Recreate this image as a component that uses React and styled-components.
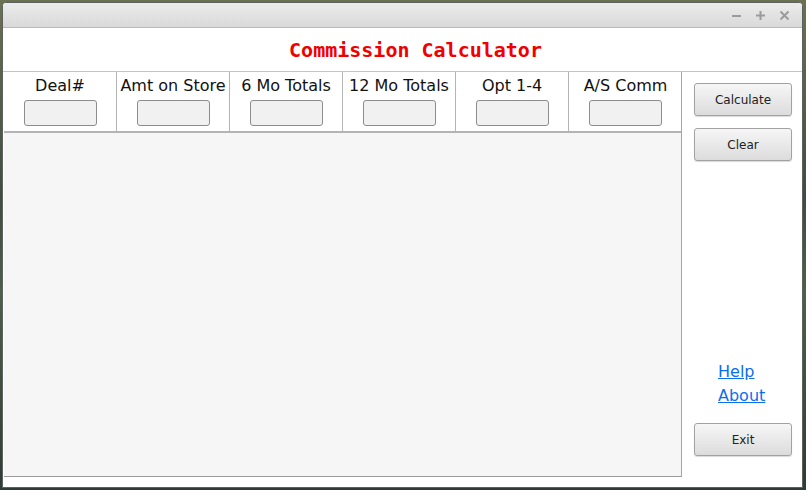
import React from "react";
import styled, { createGlobalStyle } from "styled-components";

const columns = ["Deal#", "Amt on Store", "6 Mo Totals", "12 Mo Totals", "Opt 1-4", "A/S Comm"];

const GlobalStyle = createGlobalStyle`
  html, body {
    margin: 0;
    padding: 0;
    background: #47574a;
  }
  body {
    font-family: "DejaVu Sans", sans-serif;
  }
`;

const Desktop = styled.div`
  width: 806px;
  height: 490px;
  padding: 2px 3px 2px 2px;
  box-sizing: border-box;
  background: linear-gradient(180deg, #6b7150 0%, #3f4c43 40%, #4d6048 60%, #2f3b36 100%);
`;

const Window = styled.div`
  width: 801px;
  height: 486px;
  box-sizing: border-box;
  border: 1px solid #5e625e;
  border-radius: 4px 4px 0 0;
  background: #ffffff;
  display: flex;
  flex-direction: column;
  overflow: hidden;
`;

const TitleBar = styled.div`
  height: 24px;
  flex: none;
  background: linear-gradient(180deg, #ececec 0%, #d9d9d9 100%);
  border-bottom: 1px solid #b9b9b9;
  display: flex;
  align-items: center;
  justify-content: flex-end;
  gap: 11px;
  padding-right: 11px;
`;

const WinButton = styled.span`
  width: 13px;
  height: 13px;
  display: flex;
  align-items: center;
  justify-content: center;
  color: #9b9b9b;
`;

const Header = styled.div`
  height: 43px;
  flex: none;
  display: flex;
  align-items: center;
  justify-content: center;
  padding-left: 26px;
  border-bottom: 1px solid #c4c4c4;
`;

const Title = styled.h1`
  margin: 0;
  padding-top: 1px;
  font-family: "DejaVu Sans Mono", "Liberation Mono", monospace;
  font-weight: bold;
  font-size: 20px;
  color: #f00000;
`;

const Main = styled.div`
  flex: 1;
  display: flex;
  padding-left: 1px;
  padding-bottom: 10px;
`;

const Table = styled.div`
  width: 678px;
  display: flex;
  flex-direction: column;
  border-right: 1px solid #a4a4a4;
  border-bottom: 1px solid #9a9a9a;
  box-sizing: border-box;
`;

const HeadRow = styled.div`
  display: grid;
  grid-template-columns: repeat(6, 113px);
  height: 61px;
  box-sizing: border-box;
  border-bottom: 2px solid #b4b4b4;
`;

const HeadCell = styled.div`
  display: flex;
  flex-direction: column;
  align-items: center;
  border-right: ${(p) => (p.$last ? "none" : "1px solid #b4b4b4")};
  padding-top: 4px;
`;

const Label = styled.div`
  font-size: 16px;
  color: #111;
  line-height: 19px;
  white-space: nowrap;
`;

const Field = styled.input`
  margin-top: 5px;
  width: 73px;
  height: 26px;
  box-sizing: border-box;
  border: 1px solid #8c8c8c;
  border-radius: 3px;
  background: #f1f1f1;
  padding: 0 4px;
  font-family: "DejaVu Sans", sans-serif;
`;

const Results = styled.div`
  flex: 1;
  background: #f6f6f6;
`;

const Side = styled.div`
  flex: 1;
  display: flex;
  flex-direction: column;
  padding: 11px 0 21px 12px;
`;

const Button = styled.button`
  width: 98px;
  height: 33px;
  margin-bottom: 12px;
  border: 1px solid #a2a2a2;
  border-radius: 3px;
  background: linear-gradient(180deg, #f6f6f6 0%, #dcdcdc 100%);
  box-shadow: 0 1px 1px rgba(0, 0, 0, 0.15);
  font-family: "DejaVu Sans", sans-serif;
  font-size: 12px;
  color: #222;
  padding: 0;
`;

const Links = styled.div`
  margin-top: auto;
  margin-left: 24px;
  margin-bottom: 18px;
  display: flex;
  flex-direction: column;
  gap: 5px;
`;

const Link = styled.a`
  font-size: 16px;
  line-height: 19px;
  color: #0b6ef0;
  text-decoration: underline;
`;

const ExitButton = styled(Button)`
  margin-bottom: 0;
`;

export default function App() {
  return (
    <>
      <GlobalStyle />
      <Desktop>
        <Window>
          <TitleBar>
            <WinButton>
              <svg width="11" height="11" viewBox="0 0 11 11">
                <path d="M1 6h9" stroke="#9b9b9b" strokeWidth="2" />
              </svg>
            </WinButton>
            <WinButton>
              <svg width="11" height="11" viewBox="0 0 11 11">
                <path d="M1 5.5h9M5.5 1v9" stroke="#9b9b9b" strokeWidth="2" />
              </svg>
            </WinButton>
            <WinButton>
              <svg width="11" height="11" viewBox="0 0 11 11">
                <path d="M1.5 1.5l8 8M9.5 1.5l-8 8" stroke="#9b9b9b" strokeWidth="2" />
              </svg>
            </WinButton>
          </TitleBar>
          <Header>
            <Title>Commission Calculator</Title>
          </Header>
          <Main>
            <Table>
              <HeadRow>
                {columns.map((c, i) => (
                  <HeadCell key={c} $last={i === columns.length - 1}>
                    <Label>{c}</Label>
                    <Field />
                  </HeadCell>
                ))}
              </HeadRow>
              <Results />
            </Table>
            <Side>
              <Button>Calculate</Button>
              <Button>Clear</Button>
              <Links>
                <Link href="#">Help</Link>
                <Link href="#">About</Link>
              </Links>
              <ExitButton>Exit</ExitButton>
            </Side>
          </Main>
        </Window>
      </Desktop>
    </>
  );
}
